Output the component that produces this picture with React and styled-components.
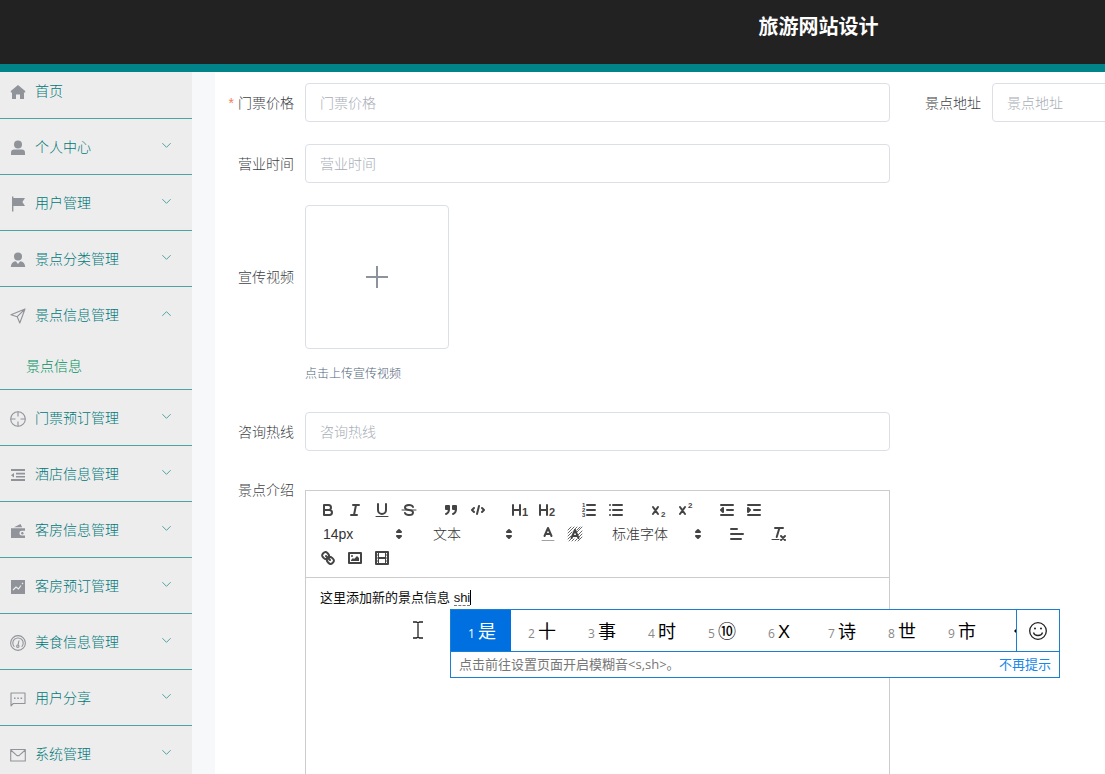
import { useState } from "react";
import styled, { createGlobalStyle } from "styled-components";

const GlobalStyle = createGlobalStyle`
* {
box-sizing: border-box;
}
body {
margin: 0;
overflow: hidden;
background: #f7f8fa;
font-family: "Liberation Sans", "Noto Sans CJK SC", sans-serif;
font-size: 14px;
font-weight: 300;
}
button, input, select {
font-family: inherit;
font-size: inherit;
font-weight: inherit;
}
`

const Mark = styled.text`
fill: #444;
stroke: none;
font-size: ${props => props.$size}px;
font-weight: bold;
`

const menuIcons = {
  home: <path fill="currentColor" d="M9 2 1.8 8v1.4H3V16h4v-4.5h4V16h4V9.4h1.2V8z" />,
  user: (
    <g fill="currentColor">
      <circle cx="9" cy="5.6" r="4" />
      <path d="M2 16v-2.2c0-2 1.2-3.2 3.2-3.2h7.6c2 0 3.2 1.2 3.2 3.2V16z" />
    </g>
  ),
  flag: <path fill="currentColor" d="M3 1.5h1.4V3H16l-2.6 4L16 11H4.4v5.5H3z" />,
  custom: (
    <g fill="currentColor">
      <circle cx="9" cy="5.4" r="4" />
      <path d="M1.8 16c.2-3.6 1.8-5.4 5-5.8L9 13l2.2-2.8c3.2.4 4.8 2.2 5 5.8z" />
    </g>
  ),
  position: <path fill="none" stroke="currentColor" strokeWidth="1.1" strokeLinejoin="round" d="M16 2 2 7.8l6.2 1.9L10.8 16zM16 2 8.2 9.7" />,
  aim: (
    <g fill="none" stroke="currentColor" strokeWidth="1.1">
      <circle cx="9" cy="9" r="7.3" />
      <path d="M9 1.7v4.8M9 11.5v4.8M1.7 9h4.8M11.5 9h4.8" />
    </g>
  ),
  fold: <path fill="currentColor" d="M2 3h14v2H2zM7 6.8h9v1.6H7zM7 10h9v1.6H7zM2 13h14v2H2zM2 9.2 5 7v4.5z" />,
  wallet: (
    <g fill="currentColor">
      <path d="M5 5.2 11.5 2l1.6 3.2z" />
      <path d="M2 6.2h14v2.6h-3.2a2.4 2.4 0 0 0 0 4.8H16V16H2z" />
      <circle cx="13.3" cy="11.2" r="1.2" />
    </g>
  ),
  marketing: (
    <g>
      <path fill="currentColor" d="M2 2h14v14H2z" />
      <path fill="none" stroke="#ededed" strokeWidth="1.2" d="m4 12 3-3 2.5 2L12 7.5M13 6l1-1" />
    </g>
  ),
  odometer: (
    <g fill="none" stroke="currentColor" strokeWidth="1.1">
      <circle cx="9" cy="9" r="7.4" />
      <path d="M5.3 12.8a5.2 5.2 0 1 1 7.4 0" />
      <circle cx="8.8" cy="12.2" r="1.2" />
      <path d="m9 11 1-4.5" />
    </g>
  ),
  chat: (
    <g>
      <path fill="none" stroke="currentColor" strokeWidth="1.1" strokeLinejoin="round" d="M2 15.8V3h14v10.5H4.3z" />
      <path fill="currentColor" d="M5 7.5h1.5V9H5zM8.3 7.5h1.5V9H8.3zM11.6 7.5h1.5V9h-1.5z" />
    </g>
  ),
  message: <path fill="none" stroke="currentColor" strokeWidth="1.1" strokeLinejoin="round" d="M1.7 3.5h14.6V15H1.7zM1.7 4l5.8 5.2q1.5 1.2 3 0L16.3 4" />,
};

const toolIcons = {
  bold: <path d="M5 4h4.5a2.5 2.5 0 0 1 0 5H5zM5 9h5.5a2.5 2.5 0 0 1 0 5H5z" />,
  italic: <path d="M7 4h6M5 14h6M8 14l2-10" />,
  underline: (
    <g>
      <path d="M5 3v6a4 4 0 0 0 8 0V3" />
      <path strokeWidth="1" d="M3 15.5h12" />
    </g>
  ),
  strike: (
    <g>
      <path d="M13 6C12.5 4.7 11 4 9 4 6.7 4 5 5 5 6.5S6.5 8.7 9 9s4 .9 4 2.5S11.3 14 9 14s-3.5-.7-4-2" />
      <path strokeWidth="1" d="M2 9h14" />
    </g>
  ),
  blockquote: (
    <g>
      <path fill="#444" d="M4 5h3v3H4zM11 5h3v3h-3z" />
      <path d="M7 8c0 4-3 5-3 5M14 8c0 4-3 5-3 5" />
    </g>
  ),
  code: <path d="M5 7 3 9l2 2M13 7l2 2-2 2M10 5 8 13" />,
  h1: (
    <g>
      <path d="M2 4v10M9 4v10M2 9h7" />
      <Mark x="11" y="15" $size={11}>1</Mark>
    </g>
  ),
  h2: (
    <g>
      <path d="M2 4v10M9 4v10M2 9h7" />
      <Mark x="11" y="15" $size={11}>2</Mark>
    </g>
  ),
  ordered: (
    <g>
      <path d="M7 4h8M7 9h8M7 14h8" />
      <Mark x="2" y="6" $size={6}>1</Mark>
      <Mark x="2" y="11" $size={6}>2</Mark>
      <Mark x="2" y="16" $size={6}>3</Mark>
    </g>
  ),
  bullet: <path d="M6 4h9M6 9h9M6 14h9M3 4h0M3 9h0M3 14h0" />,
  sub: (
    <g>
      <path d="m4 6 5 7M9 6l-5 7" />
      <Mark x="12" y="16" $size={8}>2</Mark>
    </g>
  ),
  sup: (
    <g>
      <path d="m4 6 5 7M9 6l-5 7" />
      <Mark x="12" y="7" $size={8}>2</Mark>
    </g>
  ),
  outdent: (
    <g>
      <path d="M3 4h12M9 9h6M3 14h12" />
      <path fill="#444" d="M5 7v4L3 9z" />
    </g>
  ),
  indent: (
    <g>
      <path d="M3 4h12M9 9h6M3 14h12" />
      <path fill="#444" d="M3 7v4l2-2z" />
    </g>
  ),
  color: (
    <g>
      <path strokeWidth="1" opacity="0.5" d="M3 15.5h12" />
      <path d="M5.5 11 9 3l3.5 8M6.4 9h5.2" />
    </g>
  ),
  background: (
    <g>
      <path strokeWidth="0.8" d="M2 5l3-3M2 8l6-6M2 11l4-4M2 14l3-3M3 16l3-3M6 16l2-2M9 16l2-2M12 16l4-4M13 12l3-3M12 10l4-4M11 7l5-5M8 5l3-3M11 5l3-3" />
      <path d="M5.5 13 9 5l3.5 8M6.4 11h5.2" />
    </g>
  ),
  align: <path d="M3 4h6M3 9h12M3 14h10" />,
  clean: (
    <g>
      <path d="M5 3h8M9.4 3 6.7 12M11 11l4 4M15 11l-4 4" />
      <path strokeWidth="1" d="M2 14.5h7" />
    </g>
  ),
  link: (
    <g>
      <path d="m7 7 4 4" />
      <path d="M8.9 4.6a3.5 3.5 0 0 1 .36 4.68A3.5 3.5 0 0 1 4.58 8.9C3.2 7.5 2 6.4 4.2 4.2S7.5 3.2 8.9 4.6ZM13.4 9.1a3.5 3.5 0 0 0-4.68-.36 3.5 3.5 0 0 0 .36 4.68c1.4 1.4 2.5 2.54 4.68.36S14.8 10.5 13.4 9.1Z" />
    </g>
  ),
  image: (
    <g>
      <path d="M3 4h12v10H3z" />
      <path fill="#444" stroke="none" d="M5 12v-1l2-2 1 1 3-3 2 2v3z" />
      <circle cx="6" cy="7" r="1" fill="#444" stroke="none" />
    </g>
  ),
  video: (
    <g>
      <path d="M3 3h12v12H3z" />
      <path strokeWidth="1" d="M5.5 3v12M12.5 3v12M3 6h2.5M3 9h2.5M3 12h2.5M12.5 6H15M12.5 9H15M12.5 12H15" />
      <path d="M6 9h6" />
    </g>
  ),
};

const menus = [
  { name: "首页", icon: "home", link: true },
  { name: "个人中心", icon: "user" },
  { name: "用户管理", icon: "flag" },
  { name: "景点分类管理", icon: "custom" },
  { name: "景点信息管理", icon: "position", children: ["景点信息"] },
  { name: "门票预订管理", icon: "aim" },
  { name: "酒店信息管理", icon: "fold" },
  { name: "客房信息管理", icon: "wallet" },
  { name: "客房预订管理", icon: "marketing" },
  { name: "美食信息管理", icon: "odometer" },
  { name: "用户分享", icon: "chat" },
  { name: "系统管理", icon: "message" },
];

const toolGroups = [
  ["bold", "italic", "underline", "strike"],
  ["blockquote", "code"],
  ["h1", "h2"],
  ["ordered", "bullet"],
  ["sub", "sup"],
  ["outdent", "indent"],
];

const candidates = ["是", "十", "事", "时", "⑩", "X", "诗", "世", "市"];

const Tools = ({ names }) => (
  <ToolGroup>
    {names.map((name) => (
      <ToolButton key={name} type="button" aria-label={name}>
        <ToolSvg viewBox="0 0 18 18">{toolIcons[name]}</ToolSvg>
      </ToolButton>
    ))}
  </ToolGroup>
)

const Picker = ({ label, value, wide }) => (
  <PickerBox $wide={wide}>
    <PickerSelect aria-label={label} defaultValue={value}>
      <option>{value}</option>
    </PickerSelect>
    <PickerArrow viewBox="0 0 18 18">
      <path fill="#444" d="M7 11h4l-2 2zM7 7h4L9 5z" />
    </PickerArrow>
  </PickerBox>
)

const Field = ({ id, label, required }) => (
  <FormItem>
    <Label htmlFor={id}>{required && <Star>*</Star>}{label}</Label>
    <TextInput id={id} placeholder={label} />
  </FormItem>
)

const Sidebar = () => {
  const [open, setOpen] = useState("景点信息管理");
  return (
    <Menu>
      {menus.map((item) => (
        <MenuItem key={item.name} $first={item.link}>
          <MenuButton
            type="button"
            aria-expanded={item.link ? undefined : open === item.name}
            onClick={() => setOpen(open === item.name ? "" : item.name)}
          >
            <MenuSvg viewBox="0 0 18 18">{menuIcons[item.icon]}</MenuSvg>
            <MenuName>{item.name}</MenuName>
            {!item.link && (
              <Chevron viewBox="0 0 12 12" $up={open === item.name}>
                <path d="m1.5 3.5 4.5 4.5 4.5-4.5" />
              </Chevron>
            )}
          </MenuButton>
          {open === item.name && item.children?.map((child) => (
            <SubLink key={child} href="#jingdianxinxi">{child}</SubLink>
          ))}
        </MenuItem>
      ))}
    </Menu>
  )
}

const InputMethod = () => (
  <ImePanel>
    <ImeTop>
      <Candidates>
        {candidates.map((word, i) => (
          <Candidate key={word} type="button" $active={i === 0}>
            <Index $active={i === 0}>{i + 1}</Index>{word}
          </Candidate>
        ))}
        <More viewBox="0 0 4 8"><path d="M4 2 2 4l2 2z" /></More>
      </Candidates>
      <EmojiButton type="button" aria-label="表情">
        <EmojiSvg viewBox="0 0 20 20">
          <circle cx="10" cy="10" r="8.3" />
          <path d="M5.5 11.5c1 4 8 4 9 0" />
          <path strokeWidth="2" strokeLinecap="round" d="M7 7.5h0M13 7.5h0" />
        </EmojiSvg>
      </EmojiButton>
    </ImeTop>
    <ImeHint>
      <span>点击前往设置页面开启模糊音&lt;s,sh&gt;。</span>
      <HintLink href="#dismiss">不再提示</HintLink>
    </ImeHint>
  </ImePanel>
)

const App = () => {
  return (
    <Page>
      <GlobalStyle />
      <Header>
        <Title>旅游网站设计</Title>
      </Header>
      <Body>
        <Sidebar />
        <Main>
          <Form>
            <Field id="price" label="门票价格" required />
            <Field id="address" label="景点地址" />
            <Wide><Field id="hours" label="营业时间" /></Wide>
            <Wide>
              <FormItem>
                <Label htmlFor="video">宣传视频</Label>
                <Upload id="video" type="button">
                  <PlusSvg viewBox="0 0 24 24"><path d="M12 1v22M1 12h22" /></PlusSvg>
                </Upload>
              </FormItem>
              <Tip>点击上传宣传视频</Tip>
            </Wide>
            <Wide><Field id="hotline" label="咨询热线" /></Wide>
            <Intro>
              <IntroLabel as="span" id="intro">景点介绍</IntroLabel>
              <Editor>
                <Toolbar>
                  <ToolRow>
                    {toolGroups.map((names) => <Tools key={names[0]} names={names} />)}
                  </ToolRow>
                  <ToolRow>
                    <Picker label="字号" value="14px" />
                    <Picker label="标题" value="文本" />
                    <Tools names={["color", "background"]} />
                    <Picker label="字体" value="标准字体" wide />
                    <Tools names={["align"]} />
                    <Tools names={["clean"]} />
                  </ToolRow>
                  <ToolRow>
                    <Tools names={["link", "image", "video"]} />
                  </ToolRow>
                </Toolbar>
                <Content role="textbox" aria-labelledby="intro" contentEditable suppressContentEditableWarning>
                  这里添加新的景点信息&nbsp;<Typing>shi</Typing><Caret />
                </Content>
                <Pointer viewBox="0 0 12 18">
                  <path d="M1 1h3.5L6 2l1.5-1H11M6 2v14M1 17h3.5L6 16l1.5 1H11" />
                </Pointer>
                <InputMethod />
              </Editor>
            </Intro>
          </Form>
        </Main>
      </Body>
    </Page>
  )
}

const Page = styled.div`
display: flex;
flex-direction: column;
min-width: 1637px;
height: 100vh;
overflow: hidden;
`
const Header = styled.header`
flex: none;
height: 72px;
padding-top: 13px;
background: #222;
border-bottom: 8px solid #008489;
text-align: center;
`
const Title = styled.h1`
margin: 0;
color: #fff;
font-size: 20px;
line-height: 28px;
`
const Body = styled.div`
display: flex;
flex: 1;
min-height: 0;
`
const Menu = styled.nav`
flex: none;
width: 192px;
background: #ededed;
overflow: hidden;
`
const MenuItem = styled.div`
border-bottom: 1px solid #4ba3a3;
margin-top: ${props => props.$first ? "-9px" : "0"};
`
const MenuButton = styled.button`
display: flex;
align-items: center;
width: 100%;
height: 55px;
padding: 1px 20px 0 9px;
border: 0;
background: none;
color: #007879;
`
const MenuSvg = styled.svg`
width: 18px;
height: 18px;
color: #909399;
margin: 2px 8px 0 0;
`
const MenuName = styled.span`
flex: 1;
line-height: 20px;
text-align: left;
`
const Chevron = styled.svg`
width: 11px;
height: 11px;
margin-bottom: 3px;
fill: none;
stroke: #3f9c9a;
transform: ${props => props.$up ? "rotate(180deg)" : "none"};
`
const SubLink = styled.a`
display: block;
height: 47px;
padding-left: 26px;
line-height: 48px;
color: #009060;
text-decoration: none;
`
const Main = styled.main`
flex: 1;
min-width: 0;
margin-left: 23px;
padding: 11px 60px 0 0;
background: #fff;
`
const Form = styled.form`
display: grid;
grid-template-columns: 1fr 1fr;
column-gap: 12px;
row-gap: 22px;
`
const Wide = styled.div`
grid-column: 1;
`
const Intro = styled(Wide)`
display: flex;
align-items: flex-start;
margin-top: 17px;
`
const FormItem = styled.div`
display: flex;
align-items: center;
`
const Label = styled.label`
flex: none;
width: 90px;
padding-right: 11px;
color: #404246;
line-height: 20px;
text-align: right;
`
const IntroLabel = styled(Label)`
margin-top: -10px;
`
const Star = styled.span`
margin-right: 4px;
color: #f08060;
`
const TextInput = styled.input`
flex: 1;
height: 39px;
padding: 0 14px;
border: 1px solid #dcdfe6;
border-radius: 4px;
background: #fff;
color: #404246;
outline: 0;
&::placeholder {
color: #a8adb6;
}
`
const Upload = styled.button`
display: flex;
align-items: center;
justify-content: center;
width: 144px;
height: 144px;
border: 1px solid #dcdfe6;
border-radius: 4px;
background: #fff;
`
const PlusSvg = styled.svg`
width: 24px;
height: 24px;
fill: none;
stroke: #8c939d;
stroke-width: 2;
`
const Tip = styled.div`
margin: 15px 0 6px 90px;
color: #52667d;
font-size: 12px;
line-height: 20px;
`
const Editor = styled.div`
position: relative;
flex: 1;
border: 1px solid #ccc;
`
const Toolbar = styled.div`
padding: 7px 8px;
border-bottom: 1px solid #ccc;
`
const ToolRow = styled.div`
display: flex;
gap: 15px;
height: 24px;
`
const ToolGroup = styled.div`
display: flex;
`
const ToolButton = styled.button`
display: flex;
align-items: center;
justify-content: center;
width: 27px;
height: 24px;
padding: 0;
border: 0;
background: none;
`
const ToolSvg = styled.svg`
width: 18px;
height: 18px;
fill: none;
stroke: #444;
stroke-width: 2;
stroke-linecap: round;
stroke-linejoin: round;
`
const PickerBox = styled.div`
position: relative;
width: ${props => props.$wide ? "105px" : "95px"};
`
const PickerSelect = styled.select`
width: 100%;
height: 24px;
padding: 0 0 0 9px;
border: 0;
background: none;
appearance: none;
color: #333;
`
const PickerArrow = styled.svg`
position: absolute;
top: 3px;
right: 1px;
width: 18px;
height: 18px;
stroke: #444;
stroke-width: 2;
stroke-linejoin: round;
pointer-events: none;
`
const Content = styled.div`
height: 400px;
padding: 10px 14px;
color: #111;
font-size: 13px;
font-weight: 400;
line-height: 20px;
outline: 0;
`
const Typing = styled.span`
border-bottom: 1px dashed #777;
`
const Caret = styled.span`
border-left: 1px solid #000;
`
const Pointer = styled.svg`
position: absolute;
top: 130px;
left: 106px;
width: 12px;
height: 18px;
fill: none;
stroke: #222;
stroke-width: 1.3;
`
const ImePanel = styled.div`
position: absolute;
top: 118px;
left: 144px;
width: 610px;
border: 1px solid #1a7fd0;
background: #fff;
`
const ImeTop = styled.div`
display: flex;
height: 42px;
border-bottom: 1px solid #1a7fd0;
`
const Candidates = styled.div`
display: flex;
flex: 1;
align-items: center;
overflow: hidden;
`
const Candidate = styled.button`
display: flex;
flex: none;
align-items: baseline;
gap: 3px;
width: 60px;
height: 41px;
padding: 8px 0 0 17px;
border: 0;
background: ${props => props.$active ? "#0070e0" : "none"};
color: ${props => props.$active ? "#fff" : "#000"};
font-size: 18px;
font-weight: 400;
line-height: 28px;
`
const Index = styled.span`
color: ${props => props.$active ? "#fff" : "#888"};
font-family: "Open Sans", sans-serif;
font-size: 12px;
`
const More = styled.svg`
flex: none;
width: 4px;
height: 8px;
margin-left: 21px;
`
const EmojiButton = styled.button`
display: flex;
align-items: center;
justify-content: center;
width: 43px;
padding: 0;
border: 0;
border-left: 1px solid #1a7fd0;
background: none;
`
const EmojiSvg = styled.svg`
width: 20px;
height: 20px;
fill: none;
stroke: #222;
stroke-width: 1.3;
`
const ImeHint = styled.div`
display: flex;
justify-content: space-between;
padding: 0 8px;
color: #777;
font-family: "Open Sans", "Noto Sans CJK SC", sans-serif;
font-size: 13px;
font-weight: 400;
line-height: 25px;
`
const HintLink = styled.a`
color: #1a88e8;
text-decoration: none;
`
export default App;
